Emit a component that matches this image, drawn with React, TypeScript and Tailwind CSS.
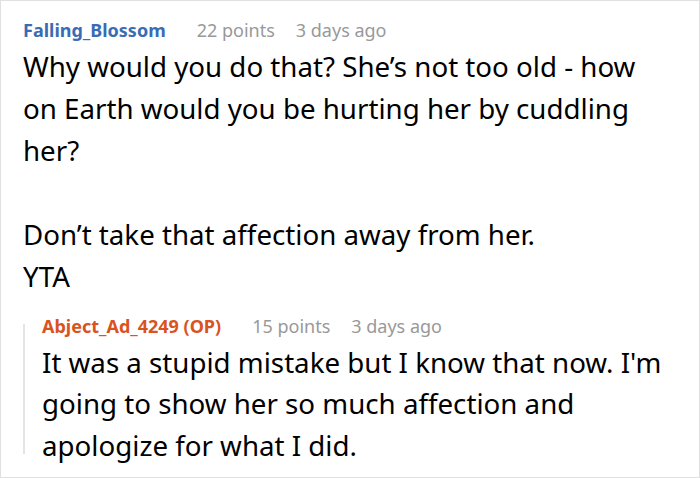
const FONT = { fontFamily: '"Noto Sans", "Open Sans", sans-serif' };

function Meta({ name, color, points, age }: { name: string; color: string; points: string; age: string }) {
  return (
    <div className="flex items-baseline text-[18px] leading-[24px]">
      <span className={`font-bold ${color}`}>{name}</span>
      <span className="ml-[31px] text-[#999999]">{points}</span>
      <span className="ml-[21px] text-[#999999]">{age}</span>
    </div>
  );
}

export default function App() {
  return (
    <div className="w-[700px] h-[478px] bg-white border border-[#e0e0e0] overflow-hidden" style={FONT}>
      <div className="pl-[22px] pr-[29px] pt-[17px]">
        <Meta name="Falling_Blossom" color="text-[#3a6cb4]" points="22 points" age="3 days ago" />
        <div className="mt-[3px] text-[27.7px] leading-[42px] text-black">
          <p>Why would you do that? She’s not too old - how on Earth would you be hurting her by cuddling her?</p>
          <p className="mt-[42px]">Don’t take that affection away from her.</p>
          <p>YTA</p>
        </div>

        <div className="mt-[17px] flex">
          <div className="w-[2px] bg-[#e4e4e4] mt-[10px] mb-[12px] shrink-0" />
          <div className="ml-[17px]">
            <Meta name="Abject_Ad_4249 (OP)" color="text-[#d9531f]" points="15 points" age="3 days ago" />
            <p className="mt-[4px] text-[27.7px] leading-[41.3px] text-black">
              It was a stupid mistake but I know that now. I'm going to show her so much affection and apologize for what I did.
            </p>
          </div>
        </div>
      </div>
    </div>
  );
}
